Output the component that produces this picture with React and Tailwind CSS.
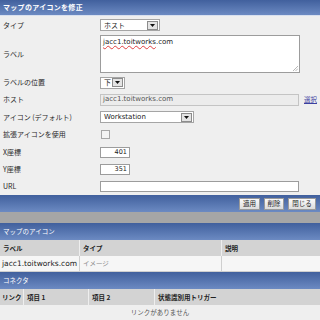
import React from 'react'

const JP = { fontFamily: '"Noto Sans CJK JP", "DejaVu Sans", sans-serif' }
const LAT = { fontFamily: '"DejaVu Sans", "Noto Sans CJK JP", sans-serif' }

const bar = 'bg-gradient-to-b from-[#41609d] to-[#6c8ac2]'

function Select({ className, value, jp }) {
  return (
    <div className={`flex h-[12px] items-center border border-[#a5a5a5] bg-white ${className}`}>
      <span className="flex-1 pl-[3px] text-[7px] leading-none text-[#222]" style={jp ? JP : LAT}>
        {value}
      </span>
      <span className="mr-[1px] flex h-[9px] w-[11px] items-center justify-center border border-[#8c8c8c] bg-[#e4e4e4]">
        <svg width="5" height="3" viewBox="0 0 5 3">
          <path d="M0 0h5L2.5 3z" fill="#111" />
        </svg>
      </span>
    </div>
  )
}

function Row({ label, h, children }) {
  return (
    <div className={`flex items-center ${h}`}>
      <div className="w-[100px] pl-[3px] text-[7px] leading-none text-[#2a2a2a]" style={JP}>
        {label}
      </div>
      <div className="flex flex-1 items-center">{children}</div>
    </div>
  )
}

function Btn({ children, className }) {
  return (
    <div
      className={`flex h-[12px] items-center justify-center border border-[#9a9a9a] bg-gradient-to-b from-[#fafafa] to-[#dcdcdc] text-[6.5px] leading-none text-[#222] ${className}`}
      style={JP}
    >
      {children}
    </div>
  )
}

export default function App() {
  return (
    <div className="h-[320px] w-[320px] overflow-hidden bg-[#efefef]">
      {/* title */}
      <div className={`flex h-[16px] items-center border-b border-[#d8e0ef] pl-[3px] ${bar}`}>
        <span className="text-[7px] font-bold leading-none tracking-[0.3px] text-white" style={JP}>
          マップのアイコンを修正
        </span>
      </div>

      {/* form */}
      <Row label="タイプ" h="h-[18px]">
        <Select className="w-[60px]" value="ホスト" jp />
      </Row>
      <Row label="ラベル" h="h-[40px]">
        <div className="relative h-[38px] w-[200px] border border-[#9c9c9c] bg-white px-[2px] pt-[2px] text-[7px] leading-none">
          <span
            className="text-[#222] underline decoration-wavy decoration-[#e04040] decoration-[0.5px]"
            style={LAT}
          >
            jacc1.toitworks
          </span>
          <span className="text-[#222]" style={LAT}>
            .com
          </span>
          <svg className="absolute bottom-[1px] right-[1px]" width="5" height="5" viewBox="0 0 5 5">
            <path d="M5 0L0 5M5 2.5L2.5 5" stroke="#999" strokeWidth="0.7" />
          </svg>
        </div>
      </Row>
      <Row label="ラベルの位置" h="h-[17px]">
        <Select className="w-[25px]" value="下" jp />
      </Row>
      <Row label="ホスト" h="h-[17px]">
        <div className="flex h-[12px] w-[199px] items-center border border-[#c4c4c4] bg-[#ececec] pl-[2px]">
          <span className="text-[7px] leading-none text-[#555]" style={LAT}>
            jacc1.toitworks.com
          </span>
        </div>
        <span className="ml-[5px] text-[6.5px] leading-none text-[#3b3fa0] underline" style={JP}>
          選択
        </span>
      </Row>
      <Row label="アイコン (デフォルト)" h="h-[18px]">
        <Select className="w-[94px]" value="Workstation" />
      </Row>
      <Row label="拡張アイコンを使用" h="h-[17px]">
        <div className="ml-[1px] h-[9px] w-[9px] border border-[#a8a8a8] bg-[#f4f4f4]" />
      </Row>
      <Row label="X座標" h="h-[18px]">
        <div className="flex h-[11px] w-[30px] items-center justify-end border border-[#9c9c9c] bg-white pr-[2px]">
          <span className="text-[6.5px] leading-none text-[#222]" style={LAT}>401</span>
        </div>
      </Row>
      <Row label="Y座標" h="h-[17px]">
        <div className="flex h-[11px] w-[30px] items-center justify-end border border-[#9c9c9c] bg-white pr-[2px]">
          <span className="text-[6.5px] leading-none text-[#222]" style={LAT}>351</span>
        </div>
      </Row>
      <Row label="URL" h="h-[17px]">
        <div className="h-[11px] w-[199px] border border-[#9c9c9c] bg-white" />
      </Row>

      {/* footer buttons */}
      <div className={`flex h-[17px] items-center justify-end gap-[4px] pr-[4px] ${bar}`}>
        <Btn className="w-[21px]">適用</Btn>
        <Btn className="w-[20px]">削除</Btn>
        <Btn className="w-[28px]">閉じる</Btn>
      </div>

      <div className="h-[11px] bg-[#a6a6a6]" />

      {/* map icons */}
      <div className={`flex h-[17px] items-center pl-[3px] ${bar}`}>
        <span className="text-[6.5px] leading-none text-white" style={JP}>マップのアイコン</span>
      </div>
      <div className="grid h-[16px] grid-cols-[80px_142px_1fr] bg-[#d3d3d3] text-[6.5px] font-bold leading-none text-[#222]" style={JP}>
        <div className="flex items-center border-r border-[#eeeeee] pl-[3px]">ラベル</div>
        <div className="flex items-center border-r border-[#eeeeee] pl-[3px]">タイプ</div>
        <div className="flex items-center pl-[3px]">説明</div>
      </div>
      <div className="grid h-[16px] grid-cols-[80px_142px_1fr] border-b border-[#cfcfcf] bg-[#f6f6f6] leading-none">
        <div className="flex items-center border-r border-[#cfcfcf] pl-[2px] text-[7.5px] text-[#222]" style={LAT}>
          jacc1.toitworks.com
        </div>
        <div className="flex items-center border-r border-[#cfcfcf] pl-[3px] text-[6.5px] text-[#888]" style={JP}>
          イメージ
        </div>
        <div />
      </div>

      {/* connectors */}
      <div className={`flex h-[17px] items-center pl-[3px] ${bar}`}>
        <span className="text-[6.5px] leading-none text-white" style={JP}>コネクタ</span>
      </div>
      <div className="grid h-[16px] grid-cols-[24px_65px_66px_1fr] bg-[#d3d3d3] text-[6.5px] font-bold leading-none text-[#222]" style={JP}>
        <div className="flex items-center border-r border-[#eeeeee] pl-[2px]">リンク</div>
        <div className="flex items-center border-r border-[#eeeeee] pl-[3px]">項目 1</div>
        <div className="flex items-center border-r border-[#eeeeee] pl-[3px]">項目 2</div>
        <div className="flex items-center pl-[3px]">状態識別用トリガー</div>
      </div>
      <div className="flex h-[15px] items-center justify-center text-[6.5px] leading-none text-[#555]" style={JP}>
        リンクがありません
      </div>
    </div>
  )
}
